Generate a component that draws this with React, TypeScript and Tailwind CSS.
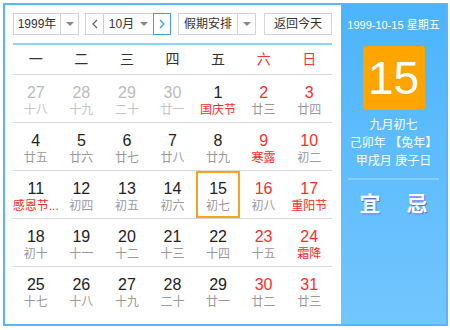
import React from 'react';

type Day = { d: number; l: string; muted?: boolean; red?: boolean; lred?: boolean; sel?: boolean };

const weeks: Day[][] = [
  [
    { d: 27, l: '十八', muted: true },
    { d: 28, l: '十九', muted: true },
    { d: 29, l: '二十', muted: true },
    { d: 30, l: '廿一', muted: true },
    { d: 1, l: '国庆节', lred: true },
    { d: 2, l: '廿三', red: true },
    { d: 3, l: '廿四', red: true },
  ],
  [
    { d: 4, l: '廿五' },
    { d: 5, l: '廿六' },
    { d: 6, l: '廿七' },
    { d: 7, l: '廿八' },
    { d: 8, l: '廿九' },
    { d: 9, l: '寒露', red: true, lred: true },
    { d: 10, l: '初二', red: true },
  ],
  [
    { d: 11, l: '感恩节...', lred: true },
    { d: 12, l: '初四' },
    { d: 13, l: '初五' },
    { d: 14, l: '初六' },
    { d: 15, l: '初七', sel: true },
    { d: 16, l: '初八', red: true },
    { d: 17, l: '重阳节', red: true, lred: true },
  ],
  [
    { d: 18, l: '初十' },
    { d: 19, l: '十一' },
    { d: 20, l: '十二' },
    { d: 21, l: '十三' },
    { d: 22, l: '十四' },
    { d: 23, l: '十五', red: true },
    { d: 24, l: '霜降', red: true, lred: true },
  ],
  [
    { d: 25, l: '十七' },
    { d: 26, l: '十八' },
    { d: 27, l: '十九' },
    { d: 28, l: '二十' },
    { d: 29, l: '廿一' },
    { d: 30, l: '廿二', red: true },
    { d: 31, l: '廿三', red: true },
  ],
];

const heads = ['一', '二', '三', '四', '五', '六', '日'];

function Caret() {
  return <span className="w-0 h-0 border-l-[4px] border-r-[4px] border-t-[4px] border-l-transparent border-r-transparent border-t-[#888]" />;
}

export default function App() {
  return (
    <div className="w-[450px] h-[330px] bg-white p-[3px] font-['Liberation_Sans','Noto_Sans_CJK_SC',sans-serif]">
      <div className="w-[445px] h-[323px] border-2 border-[#55b6f8] flex">
        <div className="w-[336px] pl-2 pr-[9px] pt-2">
          {/* toolbar */}
          <div className="flex items-center h-[22px] text-[12px] text-[#333]">
            <div className="w-[66px] h-[22px] border border-[#d3d3d3] flex">
              <span className="w-[46px] flex items-center justify-center">1999年</span>
              <span className="flex-1 border-l border-[#d3d3d3] flex items-center justify-center"><Caret /></span>
            </div>
            <div className="ml-[6px] w-[86px] h-[22px] flex">
              <span className="w-[19px] border border-[#d3d3d3] flex items-center justify-center text-[#666]">
                <svg width="6" height="10" viewBox="0 0 6 10"><path d="M5 1L1 5l4 4" fill="none" stroke="#666" strokeWidth="1.2" /></svg>
              </span>
              <span className="w-[49px] border-y border-[#d3d3d3] flex items-center justify-center gap-[6px]">10月<Caret /></span>
              <span className="w-[18px] border border-[#3a9ff2] flex items-center justify-center">
                <svg width="6" height="10" viewBox="0 0 6 10"><path d="M1 1l4 4-4 4" fill="none" stroke="#3a9ff2" strokeWidth="1.2" /></svg>
              </span>
            </div>
            <div className="ml-[7px] w-[78px] h-[22px] border border-[#d3d3d3] flex">
              <span className="w-[58px] flex items-center justify-center">假期安排</span>
              <span className="flex-1 border-l border-[#d3d3d3] flex items-center justify-center"><Caret /></span>
            </div>
            <div className="ml-[8px] w-[68px] h-[22px] border border-[#d3d3d3] flex items-center justify-center">返回今天</div>
          </div>
          <div className="mt-2 h-[2px] bg-[#8fd2ff]" />
          {/* week header */}
          <div className="grid grid-cols-7 h-[30px] border-b border-[#d8d8d8] text-[14px]">
            {heads.map((h, i) => (
              <div key={h} className={`flex items-center justify-center ${i > 4 ? 'text-[#ff3030]' : 'text-[#333]'}`}>{h}</div>
            ))}
          </div>
          {weeks.map((w, wi) => (
            <div key={wi} className={`grid grid-cols-7 h-[48px] ${wi < 4 ? 'border-b border-[#d8d8d8]' : ''}`}>
              {w.map((c, ci) => (
                <div key={ci} className="flex justify-center">
                  <div className={`w-[44px] h-[47px] flex flex-col items-center ${c.sel ? 'border-2 border-[#f8a41c] pt-[7px]' : 'pt-[9px]'}`}>
                    <span className={`text-[16px] leading-[18px] ${c.muted ? 'text-[#bbb]' : c.red ? 'text-[#ff2c2c]' : 'text-[#222]'}`}>{c.d}</span>
                    <span className={`text-[12px] leading-[16px] whitespace-nowrap ${c.lred ? 'text-[#ff2c2c]' : c.muted ? 'text-[#c4c4c4]' : 'text-[#999]'}`}>{c.l}</span>
                  </div>
                </div>
              ))}
            </div>
          ))}
        </div>
        {/* right panel */}
        <div className="flex-1 bg-gradient-to-b from-[#4bb4fb] to-[#72c6fe] flex flex-col items-center text-white pt-3">
          <div className="text-[11px] leading-[16px] whitespace-nowrap">1999-10-15 星期五</div>
          <div className="mt-[13px] w-[62px] h-[64px] rounded-[3px] bg-[#fea500] flex items-center justify-center text-[46px] leading-none">15</div>
          <div className="mt-[6px] text-[12px] leading-[18px] text-center">
            <div>九月初七</div>
            <div>己卯年 【兔年】</div>
            <div>甲戌月 庚子日</div>
          </div>
          <div className="mt-2 w-[91px] h-[2px] bg-white/25" />
          <div className="mt-[11px] flex gap-[26px] text-[21px] leading-[26px] font-bold [text-shadow:1px_1px_0_#5b6cf0]">
            <span>宜</span>
            <span>忌</span>
          </div>
        </div>
      </div>
    </div>
  );
}
